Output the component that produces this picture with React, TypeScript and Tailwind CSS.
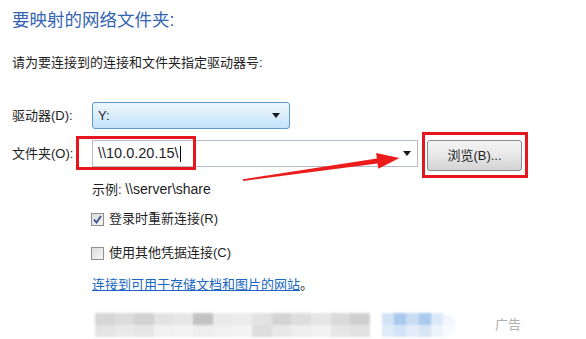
const font = { fontFamily: '"Liberation Sans", "Noto Sans CJK SC", sans-serif' };

const greyTop = ["#d6d6d6", "#dcdcdc", "#d2d2d2", "#e3e3e3", "#e6e6e6", "#c2c2c2", "#e9e9e9", "#ececec", "#e2e2e2", "#d4d4d4", "#dedede", "#e6e6e6", "#dadada", "#cfcfcf"];
const greyBot = ["#e4e4e4", "#e9e9e9", "#e6e6e6", "#f1f1f1", "#f3f3f3", "#eeeeee", "#f0f0f0", "#f4f4f4", "#dedede", "#e8e8e8", "#eeeeee", "#f2f2f2", "#e6e6e6", "#e1e1e1"];
const blueTop = ["#d3e3f6", "#a9c9ee", "#c9dcf3", "#a9c9ee", "#dbe8f7", "#f2f7fd"];
const blueBot = ["#e0ebf8", "#d4e4f6", "#e3edf9", "#d7e5f6", "#edf3fb", "#f8fbfe"];

function Checkbox({ checked }: { checked?: boolean }) {
  return (
    <div className="w-[13px] h-[13px] border border-[#8e8f8f] bg-gradient-to-br from-[#dcdcdc] to-[#f6f6f6] flex items-center justify-center">
      {checked && (
        <svg width="9" height="9" viewBox="0 0 9 9">
          <path d="M1 4.5 L3.5 7.5 L8 1" fill="none" stroke="#3b4f8c" strokeWidth="1.8" />
        </svg>
      )}
    </div>
  );
}

function Caret() {
  return (
    <svg width="8" height="5" viewBox="0 0 8 5">
      <path d="M0 0 H8 L4 5 Z" fill="#1a1a1a" />
    </svg>
  );
}

function Mosaic({ top, bot }: { top: string[]; bot: string[] }) {
  return (
    <>
      <div className="flex h-[12px]">
        {top.map((c, i) => (
          <div key={i} className="flex-1" style={{ background: c }} />
        ))}
      </div>
      <div className="flex h-[12px]">
        {bot.map((c, i) => (
          <div key={i} className="flex-1" style={{ background: c }} />
        ))}
      </div>
    </>
  );
}

export default function App() {
  return (
    <div className="relative w-[586px] h-[339px] bg-white overflow-hidden text-[#1e1e1e]" style={font}>
      <div className="pl-[12px] pt-[9px] text-[17.5px] leading-[22px] text-[#3365b4]">要映射的网络文件夹:</div>
      <div className="pl-[12px] mt-[24px] text-[13px] leading-[16px]">请为要连接到的连接和文件夹指定驱动器号:</div>

      {/* drive row */}
      <div className="flex items-center mt-[31px] pl-[12px]">
        <div className="w-[80px] text-[13px]">驱动器(D):</div>
        <div className="w-[198px] h-[27px] rounded-[3px] border border-[#5f99cc] bg-gradient-to-b from-[#eef7fe] to-[#c4e2f8] flex items-center justify-between pl-[5px] pr-[9px]">
          <span className="text-[13px]">Y:</span>
          <Caret />
        </div>
      </div>

      {/* folder row */}
      <div className="flex items-start mt-[11px] pl-[12px]">
        <div className="w-[80px] h-[27px] flex items-center text-[13px]">文件夹(O):</div>
        <div className="w-[326px] h-[27px] border border-[#b5bcc7] bg-white flex items-center justify-between pl-[5px] pr-[6px]">
          <span className="text-[14.5px] flex items-center">
            \\10.0.20.15\<span className="inline-block w-px h-[16px] bg-black ml-px" />
          </span>
          <Caret />
        </div>
        <button className="ml-[9px] w-[95px] h-[31px] rounded-[3px] border border-[#8a8a8a] bg-gradient-to-b from-[#f4f4f4] via-[#e8e8e8] to-[#d3d3d3] text-[13px] flex items-center justify-center">
          浏览(B)...
        </button>
      </div>

      <div className="pl-[92px] mt-[10px] text-[13px] leading-[16px]">
        示例: <span className="text-[14px]">\\server\share</span>
      </div>

      <div className="flex items-center gap-[5px] pl-[91px] mt-[13px] text-[13px] leading-[16px]">
        <Checkbox checked />
        <span>登录时重新连接(R)</span>
      </div>
      <div className="flex items-center gap-[5px] pl-[91px] mt-[18px] text-[13px] leading-[16px]">
        <Checkbox />
        <span>使用其他凭据连接(C)</span>
      </div>

      <div className="pl-[92px] mt-[16px] text-[13px] leading-[16px]">
        <span className="text-[#1a66c2] underline">连接到可用于存储文档和图片的网站</span>。
      </div>

      {/* blurred ad */}
      <div className="flex items-center mt-[20px] pl-[95px]">
        <div className="flex flex-col w-[275px] blur-[1px]">
          <Mosaic top={greyTop} bot={greyBot} />
        </div>
        <div className="flex flex-col w-[73px] ml-[12px] rounded-r-full overflow-hidden blur-[1px]">
          <Mosaic top={blueTop} bot={blueBot} />
        </div>
        <div className="ml-[40px] text-[13px] text-[#b0b0b0]">广告</div>
      </div>

      {/* annotations */}
      <div className="absolute left-[76px] top-[136px] w-[120px] h-[34px] border-[3px] border-[#e5161d]" />
      <div className="absolute left-[422px] top-[132px] w-[106px] h-[46px] border-[3px] border-[#e5161d]" />
      <svg className="absolute left-0 top-0" width="586" height="339">
        <polygon
          points="243,179.3 376.9,158.6 376.1,153 399.5,158 378.3,168.8 377.5,163.4 243,181"
          fill="#ec1c1c"
        />
      </svg>
    </div>
  );
}
